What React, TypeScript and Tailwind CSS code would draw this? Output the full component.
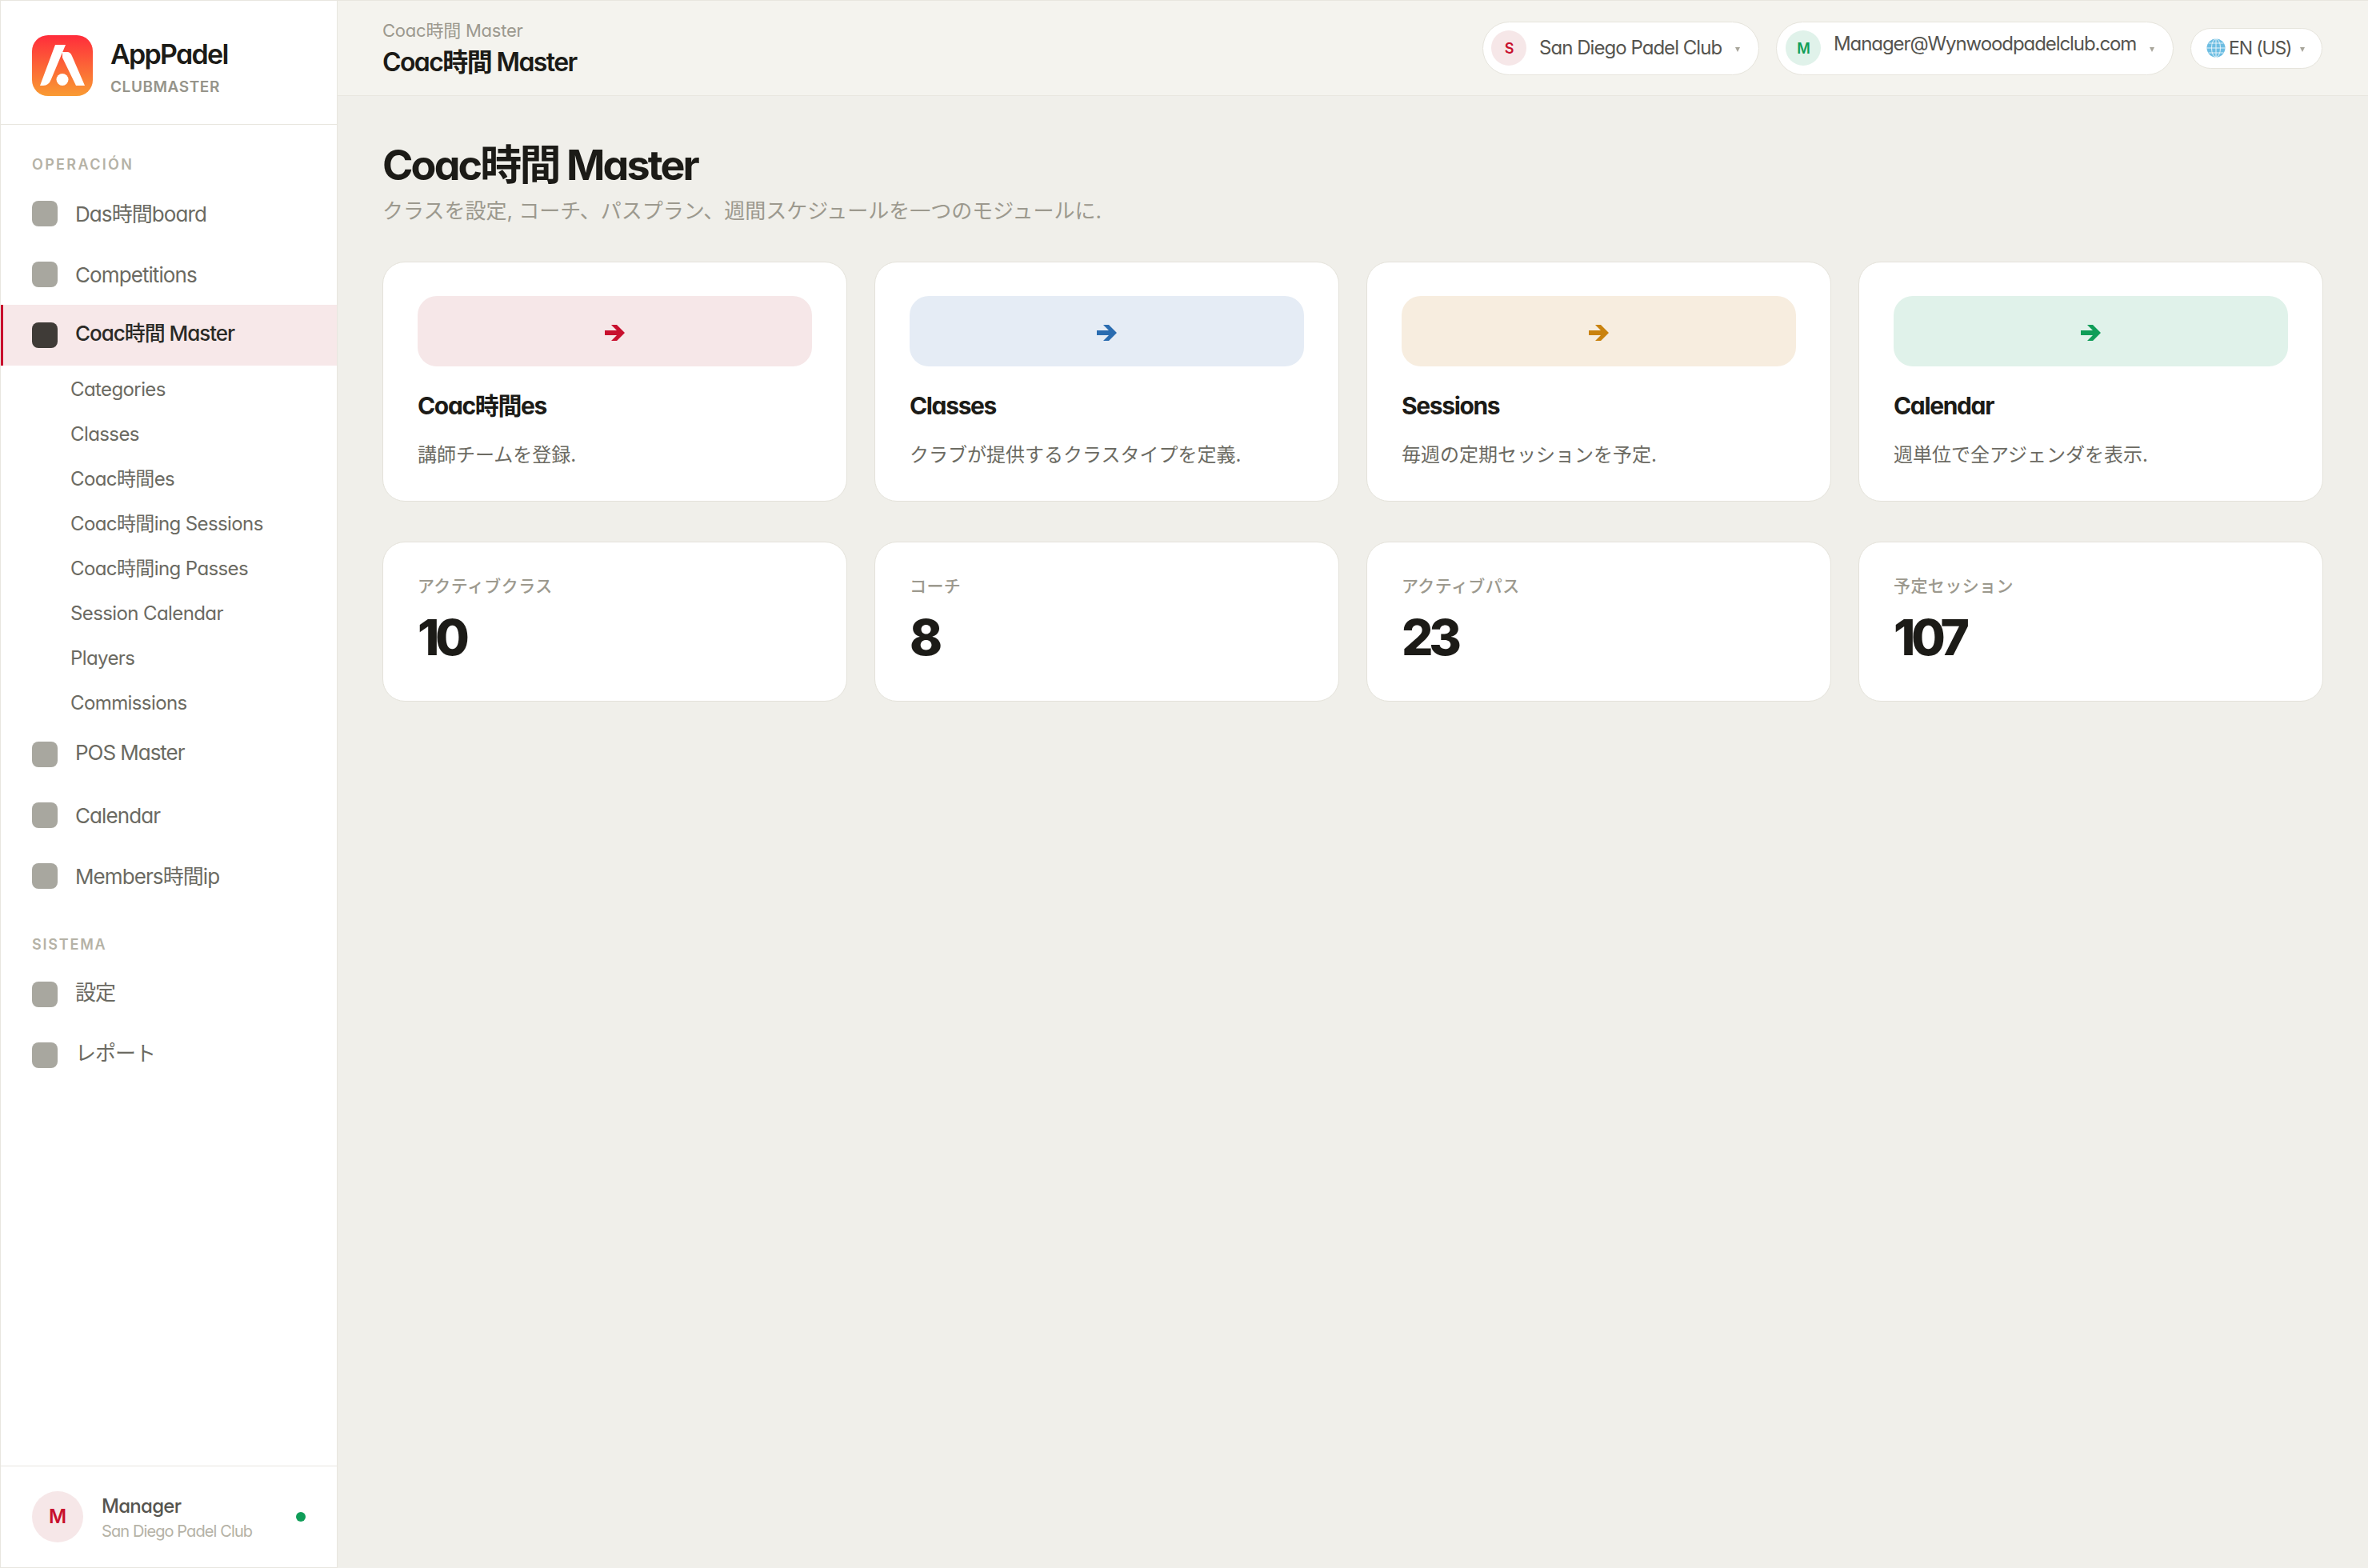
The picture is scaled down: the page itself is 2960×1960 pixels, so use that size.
const mainNavTop = ['Das時間board', 'Competitions']
const subNav = [
  'Categories',
  'Classes',
  'Coac時間es',
  'Coac時間ing Sessions',
  'Coac時間ing Passes',
  'Session Calendar',
  'Players',
  'Commissions',
]

const modules = [
  { title: 'Coac時間es', desc: '講師チームを登録.', box: 'bg-[#f6e7e8]', arrow: 'fill-[#c8102e]' },
  { title: 'Classes', desc: 'クラブが提供するクラスタイプを定義.', box: 'bg-[#e5ecf5]', arrow: 'fill-[#2a6cb0]' },
  { title: 'Sessions', desc: '毎週の定期セッションを予定.', box: 'bg-[#f7eddf]', arrow: 'fill-[#c9820e]' },
  { title: 'Calendar', desc: '週単位で全アジェンダを表示.', box: 'bg-[#e0f2ea]', arrow: 'fill-[#0f9d58]' },
]

const stats = [
  { label: 'アクティブクラス', value: '10' },
  { label: 'コーチ', value: '8' },
  { label: 'アクティブパス', value: '23' },
  { label: '予定セッション', value: '107' },
]

function Logo() {
  return (
    <svg width="76" height="76" viewBox="0 0 76 76" className="shrink-0">
      <defs>
        <linearGradient id="logoGrad" x1="0" y1="0" x2="0" y2="1">
          <stop offset="0" stopColor="#ff2c3b" />
          <stop offset="1" stopColor="#f99b33" />
        </linearGradient>
      </defs>
      <rect width="76" height="76" rx="20" fill="url(#logoGrad)" />
      <path d="M29 12 H42 L24 55 Q21 63 14 63 H10 Z" fill="#fff" />
      <path d="M38 21 H44 Q48 21 50 26 L66 63 H55 L38 28 Z" fill="#fff" />
      <circle cx="38" cy="55.5" r="7.5" fill="#fff" />
    </svg>
  )
}

function Caret() {
  return (
    <svg width="6" height="6" viewBox="0 0 6 6" className="mt-[3px] shrink-0">
      <path d="M0 0 H6 L3 6 Z" fill="#a8a59a" />
    </svg>
  )
}

function Globe() {
  return (
    <svg width="24" height="24" viewBox="0 0 24 24" className="shrink-0">
      <circle cx="12" cy="12" r="11.5" fill="#6cbde2" />
      <g fill="none" stroke="#e4f3fa" strokeWidth="1">
        <ellipse cx="12" cy="12" rx="5.5" ry="11.5" />
        <path d="M12 0.5 V23.5 M0.5 12 H23.5 M2.5 6 H21.5 M2.5 18 H21.5" />
      </g>
    </svg>
  )
}

function Arrow({ className }: { className: string }) {
  return (
    <svg width="25" height="22" viewBox="0 0 25 22" className={`mt-[3px] ${className}`}>
      <polygon points="0,8 15,8 8,1 15,1 25,11 15,21 8,21 15,14 0,14" />
    </svg>
  )
}

function NavItem({ label, active, raised }: { label: string; active?: boolean; raised?: boolean }) {
  return (
    <div
      className={
        active
          ? 'flex h-[76px] items-center gap-[22px] border-l-[3px] border-[#c8102e] bg-[#f7e8e9] pl-[36px] text-[26px] font-medium text-[#2b2a26]'
          : 'flex h-[76px] items-center gap-[22px] pl-[39px] text-[26px] text-[#6b6a62]'
      }
    >
      <span className={active ? 'h-8 w-8 shrink-0 rounded-lg bg-[#3f3b37]' : 'h-8 w-8 shrink-0 rounded-lg bg-[#a8a79f]'} />
      <span className={raised ? 'mb-[5px] tracking-[-0.04em]' : 'tracking-[-0.035em]'}>{label}</span>
    </div>
  )
}

function Sidebar() {
  return (
    <aside className="flex h-full w-[422px] shrink-0 flex-col border border-[#e8e6df] bg-white">
      <div className="flex h-[155px] shrink-0 items-center gap-[22px] border-b border-[#e8e6df] pt-[7px] pl-[39px]">
        <Logo />
        <div className="pt-1">
          <div className="text-[34px] leading-[42px] font-semibold tracking-[-0.05em] text-[#1c1b17]">AppPadel</div>
          <div className="mt-[8px] text-[19px] leading-6 font-semibold tracking-[0.03em] text-[#96948a]">CLUBMASTER</div>
        </div>
      </div>

      <nav className="flex-1">
        <div className="mt-[38px] mb-[11px] pl-[39px] text-[18px] leading-6 font-semibold tracking-[0.13em] text-[#b5b2a6]">
          OPERACIÓN
        </div>
        {mainNavTop.map((label) => (
          <NavItem key={label} label={label} />
        ))}
        <NavItem label="Coac時間 Master" active raised />
        {subNav.map((label) => (
          <div key={label} className="flex h-14 items-center pt-[3px] pl-[87px] text-[24px] tracking-[-0.025em] text-[#6b6a62]">
            {label}
          </div>
        ))}
        <NavItem label="POS Master" raised />
        <NavItem label="Calendar" />
        <NavItem label="Members時間ip" />
        <div className="mt-[36px] mb-[12px] pl-[39px] text-[18px] leading-6 font-semibold tracking-[0.1em] text-[#b5b2a6]">
          SISTEMA
        </div>
        <NavItem label="設定" raised />
        <NavItem label="レポート" raised />
      </nav>

      <div className="flex h-[127px] shrink-0 items-center border-t border-[#e8e6df] px-[39px]">
        <div className="flex h-16 w-16 shrink-0 items-center justify-center rounded-full bg-[#f6e7e8] text-[24px] font-semibold text-[#c8102e]">
          M
        </div>
        <div className="ml-[23px] flex-1 pt-[3px]">
          <div className="text-[24px] leading-[30px] font-medium tracking-[-0.03em] text-[#55544f]">Manager</div>
          <div className="mt-[2px] text-[20px] leading-[28px] tracking-[-0.045em] text-[#b5b2a6]">San Diego Padel Club</div>
        </div>
        <span className="h-3 w-3 rounded-full bg-[#0f9d58]" />
      </div>
    </aside>
  )
}

function TopBar() {
  return (
    <header className="flex h-[120px] shrink-0 items-center justify-between border-t border-b border-[#e8e6df] bg-[#f4f3ee] pr-[57px] pl-[56px]">
      <div>
        <div className="text-[22px] leading-[30px] tracking-[-0.01em] text-[#9c998e]">Coac時間 Master</div>
        <div className="mt-[5px] text-[32px] leading-[40px] font-semibold tracking-[-0.05em] text-[#1c1b17]">Coac時間 Master</div>
      </div>
      <div className="flex items-center gap-[21px]">
        <div className="flex h-[67px] w-[346px] items-center rounded-full border border-[#e6e4dc] bg-white pl-[10px] text-[24px] tracking-[-0.04em] text-[#55544f]">
          <span className="flex h-11 w-11 shrink-0 items-center justify-center rounded-full bg-[#f6e7e8] text-[18px] font-semibold text-[#c8102e]">S</span>
          <span className="ml-4">San Diego Padel Club</span>
          <span className="ml-auto pr-[23px]"><Caret /></span>
        </div>
        <div className="flex h-[67px] w-[497px] items-center rounded-full border border-[#e6e4dc] bg-white pl-[11px] text-[24px] tracking-[-0.045em] text-[#55544f]">
          <span className="flex h-11 w-11 shrink-0 items-center justify-center rounded-full bg-[#e0f2ea] text-[18px] font-semibold text-[#0f9d58]">M</span>
          <span className="mb-[10px] ml-4">Manager@Wynwoodpadelclub.com</span>
          <span className="ml-auto pr-[23px]"><Caret /></span>
        </div>
        <div className="flex h-[51px] w-[165px] items-center rounded-full border border-[#e6e4dc] bg-white pl-[19px] text-[23px] tracking-[-0.05em] text-[#55544f]">
          <Globe />
          <span className="ml-1">EN (US)</span>
          <span className="ml-auto pr-[21px]"><Caret /></span>
        </div>
      </div>
    </header>
  )
}

export default function App() {
  return (
    <div className="flex h-screen bg-[#f0efea] font-[Inter,'Noto_Sans_CJK_JP',sans-serif] [font-feature-settings:'cv11']">
      <Sidebar />
      <div className="flex flex-1 flex-col">
        <TopBar />
        <main className="flex-1 pt-[55px] pr-[56px] pl-[56px]">
          <h1 className="text-[52px] leading-[64px] font-bold tracking-[-0.055em] text-[#1c1b17]">Coac時間 Master</h1>
          <p className="mt-[7px] mb-[-2px] text-[26px] leading-[36px] text-[#9c998e]">
            クラスを設定, コーチ、パスプラン、週間スケジュールを一つのモジュールに.
          </p>

          <div className="mt-[47px] grid grid-cols-4 gap-x-[34px] gap-y-[50px]">
            {modules.map((m) => (
              <div key={m.title} className="rounded-[28px] border border-[#e4e2da] bg-white px-[43px] pt-[42px] pb-[40px]">
                <div className={`flex h-[88px] items-center justify-center rounded-3xl ${m.box}`}>
                  <Arrow className={m.arrow} />
                </div>
                <div className="mt-[30px] text-[30px] leading-[38px] font-bold tracking-[-0.045em] text-[#1c1b17]">{m.title}</div>
                <div className="mt-[26px] text-[24px] leading-[34px] text-[#6b6a62]">{m.desc}</div>
              </div>
            ))}
            {stats.map((s) => (
              <div key={s.label} className="rounded-[28px] border border-[#e4e2da] bg-white px-[43px] pt-[39px] pb-[46px]">
                <div className="pt-[2px] text-[21px] leading-[28px] font-medium tracking-[0.02em] text-[#9c998e]">{s.label}</div>
                <div className="mt-[15px] mb-[-2px] text-[62px] leading-[70px] font-extrabold tracking-[-0.085em] text-[#1c1b17]">{s.value}</div>
              </div>
            ))}
          </div>
        </main>
      </div>
    </div>
  )
}
